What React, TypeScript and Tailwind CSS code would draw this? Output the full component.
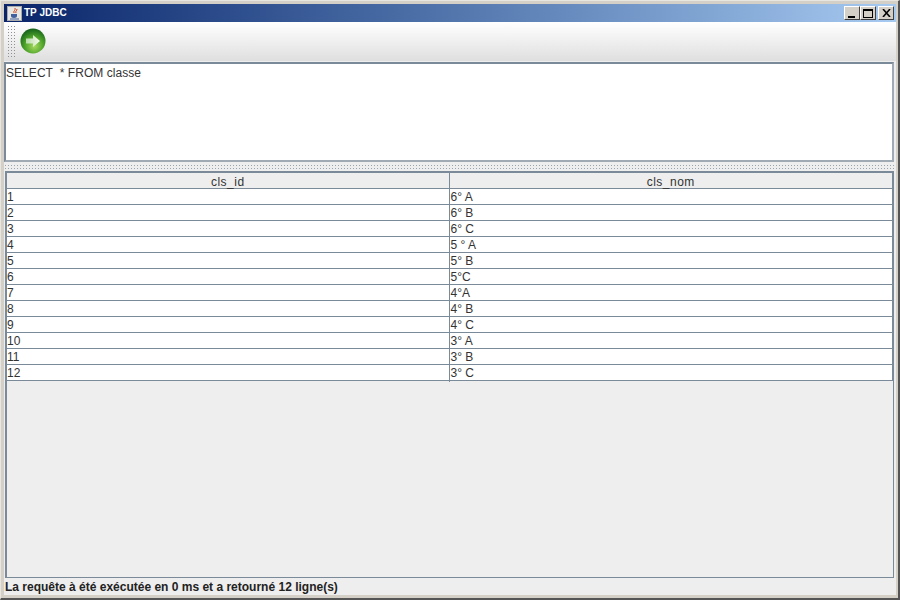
const rows = [
  ["1", "6° A"],
  ["2", "6° B"],
  ["3", "6° C"],
  ["4", "5 ° A"],
  ["5", "5° B"],
  ["6", "5°C"],
  ["7", "4°A"],
  ["8", "4° B"],
  ["9", "4° C"],
  ["10", "3° A"],
  ["11", "3° B"],
  ["12", "3° C"],
];

const font = { fontFamily: '"Liberation Sans", Arial, sans-serif' };

const WinButton = ({ children }: { children: React.ReactNode }) => (
  <div className="w-[16px] h-[14px] bg-[#d4d0c8] border border-t-white border-l-white border-r-[#404040] border-b-[#404040] flex items-center justify-center">
    {children}
  </div>
);

const App = () => {
  return (
    <div
      style={font}
      className="w-[900px] h-[600px] overflow-hidden flex flex-col bg-[#d4d0c8] border-t-[1px] border-l-[1px] border-r-[2px] border-b-[2px] border-t-[#e8e6e0] border-l-[#e8e6e0] border-r-[#555] border-b-[#555] pt-[3px] pl-[3px] pr-[2px] pb-[3px]"
    >
      {/* Title bar */}
      <div className="h-[18px] shrink-0 flex items-center bg-gradient-to-r from-[#0a246a] to-[#a6caf0] pl-[3px] pr-[2px]">
        <div className="w-[15px] h-[15px] bg-[#e8e6e0] border border-[#aaa] flex items-center justify-center">
          <svg width="11" height="13" viewBox="0 0 11 13">
            <path d="M6 1c1 2-2 3-1 5M8 2c0 2-2 2-1 4" stroke="#d04020" fill="none" strokeWidth="1" />
            <path d="M2 7h6v2c0 1-1 2-3 2s-3-1-3-2z" fill="#4060a0" />
            <path d="M1 12h9" stroke="#4060a0" />
          </svg>
        </div>
        <span className="ml-[2px] text-[10px] leading-none font-bold text-white">TP JDBC</span>
        <div className="ml-auto flex">
          <WinButton>
            <div className="w-[7px] h-[2px] bg-black mt-[7px] mr-[2px]" />
          </WinButton>
          <WinButton>
            <div className="w-[10px] h-[9px] border border-black border-t-2" />
          </WinButton>
          <div className="ml-[2px]">
            <WinButton>
              <svg width="9" height="8" viewBox="0 0 9 8">
                <path d="M1 0l7 8M8 0L1 8" stroke="#000" strokeWidth="1.6" />
              </svg>
            </WinButton>
          </div>
        </div>
      </div>

      {/* Toolbar */}
      <div className="h-[39px] shrink-0 flex items-center bg-gradient-to-b from-white to-[#dfdfdf]">
        <div className="ml-[3px] w-[9px] h-[34px] bg-[radial-gradient(circle,#909090_0.9px,transparent_1px)] bg-[size:3px_3px]" />
        <svg className="ml-[3px] -mt-[1px]" width="28" height="28" viewBox="0 0 28 28">
          <defs>
            <radialGradient id="ball" cx="0.55" cy="0.7" r="0.7">
              <stop offset="0" stopColor="#a8dc60" />
              <stop offset="0.55" stopColor="#4aa028" />
              <stop offset="1" stopColor="#14601a" />
            </radialGradient>
            <linearGradient id="arrow" x1="0" x2="1" y1="0" y2="0">
              <stop offset="0" stopColor="#b8dca8" />
              <stop offset="1" stopColor="#f4faec" />
            </linearGradient>
          </defs>
          <circle cx="14" cy="14" r="12.5" fill="url(#ball)" />
          <path d="M7 11.5h7V8l7 6-7 6v-3.5H7z" fill="url(#arrow)" />
        </svg>
      </div>

      <div className="flex-1 min-h-0 flex flex-col bg-[#eeeeee]">
        {/* Query text */}
        <div className="h-[100px] shrink-0 mt-[1px] mr-[2px] bg-white border-2 border-[#7a8a99] border-r-[#a0aab4] border-b-[#a0aab4] pt-[2px] text-[12px] tracking-[0.05px] leading-[14px] text-[#333]">
          SELECT&nbsp; * FROM classe
        </div>

        {/* Split divider */}
        <div className="h-[9px] shrink-0 flex items-center">
          <div className="w-full h-[5px] bg-[radial-gradient(circle,#98a4ae_0.9px,transparent_1px)] bg-[size:3px_3px]" />
        </div>

        {/* Results */}
        <div className="flex-1 min-h-0 ml-[1px] mr-[2px] border-2 border-[#7a8a99] border-r-[1px] border-b-[1px] border-r-[#7a8a99] border-b-[#7a8a99]">
          <div className="grid grid-cols-2 h-[16px] text-[12px] tracking-[0.5px] leading-[19px] text-[#333] border-b border-r border-[#7a8a99]">
            <div className="text-center border-r border-[#7a8a99]">cls_id</div>
            <div className="text-center">cls_nom</div>
          </div>
          {rows.map((r) => (
            <div key={r[0]} className="grid grid-cols-2 h-[16px] bg-white text-[12px] leading-[17px] text-[#333] border-b border-r border-[#7a8a99]">
              <div className="border-r border-[#7a8a99]">{r[0]}</div>
              <div className="pl-[1px]">{r[1]}</div>
            </div>
          ))}
        </div>

        {/* Status */}
        <div className="h-[17px] shrink-0 flex items-center pl-[1px] text-[12px] font-bold text-[#222]">
          La requête à été exécutée en 0 ms et a retourné 12 ligne(s)
        </div>
      </div>
    </div>
  );
};

export default App;
